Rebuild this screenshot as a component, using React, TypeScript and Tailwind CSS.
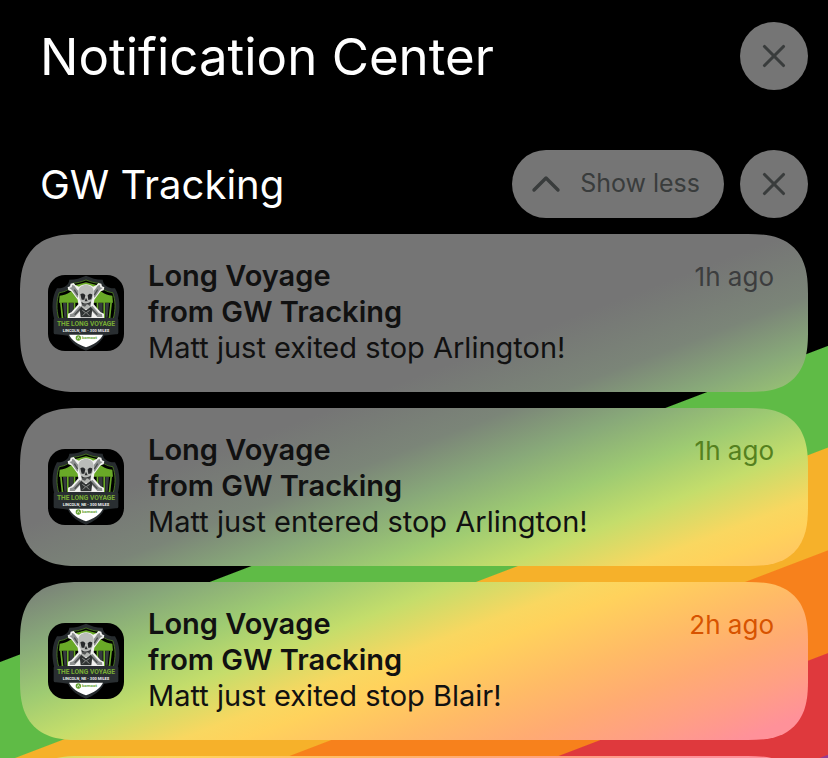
import { ChevronUp, X } from "lucide-react";

type Notification = {
  id: number;
  title: string;
  source: string;
  message: string;
  time: string;
  timeColor: string;
};

const notifications: Notification[] = [
  {
    id: 1,
    title: "Long Voyage",
    source: "from GW Tracking",
    message: "Matt just exited stop Arlington!",
    time: "1h ago",
    timeColor: "text-[#3c3d3e]",
  },
  {
    id: 2,
    title: "Long Voyage",
    source: "from GW Tracking",
    message: "Matt just entered stop Arlington!",
    time: "1h ago",
    timeColor: "text-[#55811f]",
  },
  {
    id: 3,
    title: "Long Voyage",
    source: "from GW Tracking",
    message: "Matt just exited stop Blair!",
    time: "2h ago",
    timeColor: "text-[#d75300]",
  },
];

// Diagonal rainbow stripes of the wallpaper.
const wallpaper =
  "bg-black bg-fixed bg-[linear-gradient(159.1deg,#000_618px,#5fbb46_619px,#5fbb46_713px,#f6b12a_714px,#f6b12a_809px,#f7811c_810px,#f7811c_905px,#df393d_906px,#df393d_1000px,#953b94_1001px)]";

// The same stripes, softened and lightened, as seen through a card.
const frosted =
  "bg-fixed bg-[linear-gradient(159.1deg,#757575_500px,#7b8578_565px,#88a979_612px,#9ecb72_662px,#c4dd6b_707px,#f9d760_755px,#ffd25c_777px,#ffbb66_832px,#ffab72_875px,#ff9f84_915px,#ff9199_955px)]";

function RaceLogo() {
  return (
    <svg viewBox="0 0 228 228" className="size-[76px] shrink-0 rounded-[17px] bg-black" role="img" aria-label="The Long Voyage">
      <path
        d="M114 2 C98 9 84 14 64 14 C62 31 48 41 27 40 C12 64 10 100 19 134 L19 176 L60 182 C70 204 92 218 114 227 C136 218 158 204 168 182 L209 176 L209 134 C218 100 216 64 201 40 C180 41 166 31 164 14 C144 14 130 9 114 2 Z"
        fill="#272c2f"
      />
      <path
        d="M114 15 C100 21 88 24 74 25 C69 42 53 51 34 53 C25 76 25 104 32 130 L196 130 C203 104 203 76 194 53 C175 51 159 42 154 25 C140 24 128 21 114 15 Z"
        fill="#000"
        stroke="#5c9a24"
        strokeWidth="2"
      />
      <path
        d="M114 22 L80 31 C76 48 60 60 35 62 L33 83 H195 L193 62 C168 60 152 48 148 31 Z"
        fill="#69a927"
      />
      <g fill="#363b3e">
        <path d="M45 84 H56 V128 H49 Z" />
        <path d="M64 84 H76 V128 H64 Z" />
        <path d="M152 84 H164 V128 H152 Z" />
        <path d="M172 84 H183 L179 128 H172 Z" />
      </g>
      <g fill="#69a927">
        <path d="M36 82 H41 L46 129 H41 Z" />
        <path d="M57 82 H62 V129 H57 Z" />
        <path d="M77 82 H82 V129 H77 Z" />
        <path d="M146 82 H151 V129 H146 Z" />
        <path d="M166 82 H171 V129 H166 Z" />
        <path d="M187 82 H192 L187 129 H182 Z" />
      </g>
      <path
        d="M59 37 L66 34 L68 26 L77 24 L83 31 L93 35 C102 25 126 25 135 35 L145 31 L151 24 L160 26 L162 34 L169 37 L167 46 L158 49 L139 74 L137 88 L158 112 L168 116 V129 H60 V116 L70 112 L91 88 L89 74 L70 49 L61 46 Z"
        fill="#f1f1ef"
      />
      <path
        d="M64 39 L71 37 L73 29 L79 32 L86 42 L91 48 L90 66 L88 68 L72 45 Z M164 39 L157 37 L155 29 L149 32 L142 42 L137 48 L138 66 L140 68 L156 45 Z M95 92 L104 100 L80 126 H65 L66 118 L75 115 Z M133 92 L124 100 L148 126 H163 L162 118 L153 115 Z"
        fill="#8d908f"
      />
      <path d="M80 119 L104 94 M148 119 L124 94 M79 44 L89 60 M149 44 L139 60" stroke="#4b4e4e" strokeWidth="4" fill="none" />
      <path
        d="M91 52 C91 36 101 30 114 30 C127 30 137 36 137 52 C137 64 135 70 130 77 L129 92 L121 102 H107 L100 92 L98 78 C93 70 91 62 91 52 Z"
        fill="#babcb9"
      />
      <path d="M97 58 C102 54 109 56 112 61 L109 74 L101 74 Z M119 61 C123 55 130 55 133 59 L130 73 L121 75 Z" fill="#27292b" />
      <path d="M114 68 L119 79 H110 Z M100 80 C109 88 121 87 129 79 L126 93 L117 88 L111 95 L103 92 Z" fill="#2c2e2f" />
      <path d="M105 87 V95 M111 87 V99 M117 87 V99 M123 86 V94" stroke="#a5a7a5" strokeWidth="2" />
      <path d="M95 102 L101 97 L114 106 L127 97 L133 102 L130 127 H98 Z" fill="#303333" />
      <path d="M103 106 L113 113 L104 122 M125 106 L115 113 L124 122" stroke="#8f9290" strokeWidth="3" fill="none" />
      <rect x="17" y="129" width="194" height="49" rx="5" fill="#292e31" />
      <text x="114" y="152" textAnchor="middle" fill="#78ad34" className="font-[Roboto,sans-serif] text-[20px] font-bold">
        THE LONG VOYAGE
      </text>
      <text x="114" y="171" textAnchor="middle" fill="#f2f2f2" className="font-[Roboto,sans-serif] text-[12px] font-bold">
        LINCOLN, NE - 300 MILES
      </text>
      <path d="M63 179 H165 C157 196 137 209 114 217 C91 209 71 196 63 179 Z" fill="#fff" />
      <circle cx="91" cy="189" r="8" fill="#5f9f2b" />
      <path d="M87 193 L91 185 L95 193" fill="none" stroke="#fff" strokeWidth="2" />
      <text x="102" y="193" fill="#69a538" className="font-[Roboto,sans-serif] text-[13px] font-bold">
        komoot
      </text>
    </svg>
  );
}

function CloseButton({ label }: { label: string }) {
  return (
    <button
      type="button"
      aria-label={label}
      className="flex size-[68px] shrink-0 items-center justify-center rounded-full bg-[#757575] text-[#393c3c]"
    >
      <X className="size-[38px]" strokeWidth={2} />
    </button>
  );
}

function NotificationCard({ item }: { item: Notification }) {
  return (
    <li className={`flex items-center gap-6 rounded-[60px] px-7 py-6 [corner-shape:superellipse(1.4)] ${frosted}`}>
      <RaceLogo />
      <div className="min-w-0 flex-1 pb-0.5 text-[29px] leading-9 text-[#111]">
        <div className="flex h-9 items-baseline justify-between pr-[6px]">
          <h3 className="font-semibold">{item.title}</h3>
          <time className={`text-[26px] ${item.timeColor}`}>{item.time}</time>
        </div>
        <p className="font-semibold">{item.source}</p>
        <p>{item.message}</p>
      </div>
    </li>
  );
}

export default function App() {
  return (
    <main className={`h-screen overflow-hidden px-5 pt-[22px] font-[Inter,sans-serif] ${wallpaper}`}>
      <header className="flex items-center justify-between pl-5">
        <h1 className="pt-0.5 text-[51px] leading-[66px] text-white">Notification Center</h1>
        <CloseButton label="Clear all notifications" />
      </header>

      <section className="mt-[60px]">
        <div className="flex items-center gap-4 pl-5">
          <h2 className="flex-1 pt-0.5 text-[40px] leading-[66px] text-white">GW Tracking</h2>
          <button
            type="button"
            className="flex h-[68px] items-center gap-[10px] rounded-full bg-[#757575] pr-6 pl-[10px] text-[25px] text-[#393c3c]"
          >
            <ChevronUp className="size-12" strokeWidth={1.7} />
            Show less
          </button>
          <CloseButton label="Clear GW Tracking" />
        </div>

        <ul className="mt-4 flex flex-col gap-4">
          {notifications.map((item) => (
            <NotificationCard key={item.id} item={item} />
          ))}
          <li
            aria-hidden="true"
            className={`h-[158px] rounded-[60px] [corner-shape:superellipse(1.4)] ${frosted}`}
          />
        </ul>
      </section>
    </main>
  );
}
